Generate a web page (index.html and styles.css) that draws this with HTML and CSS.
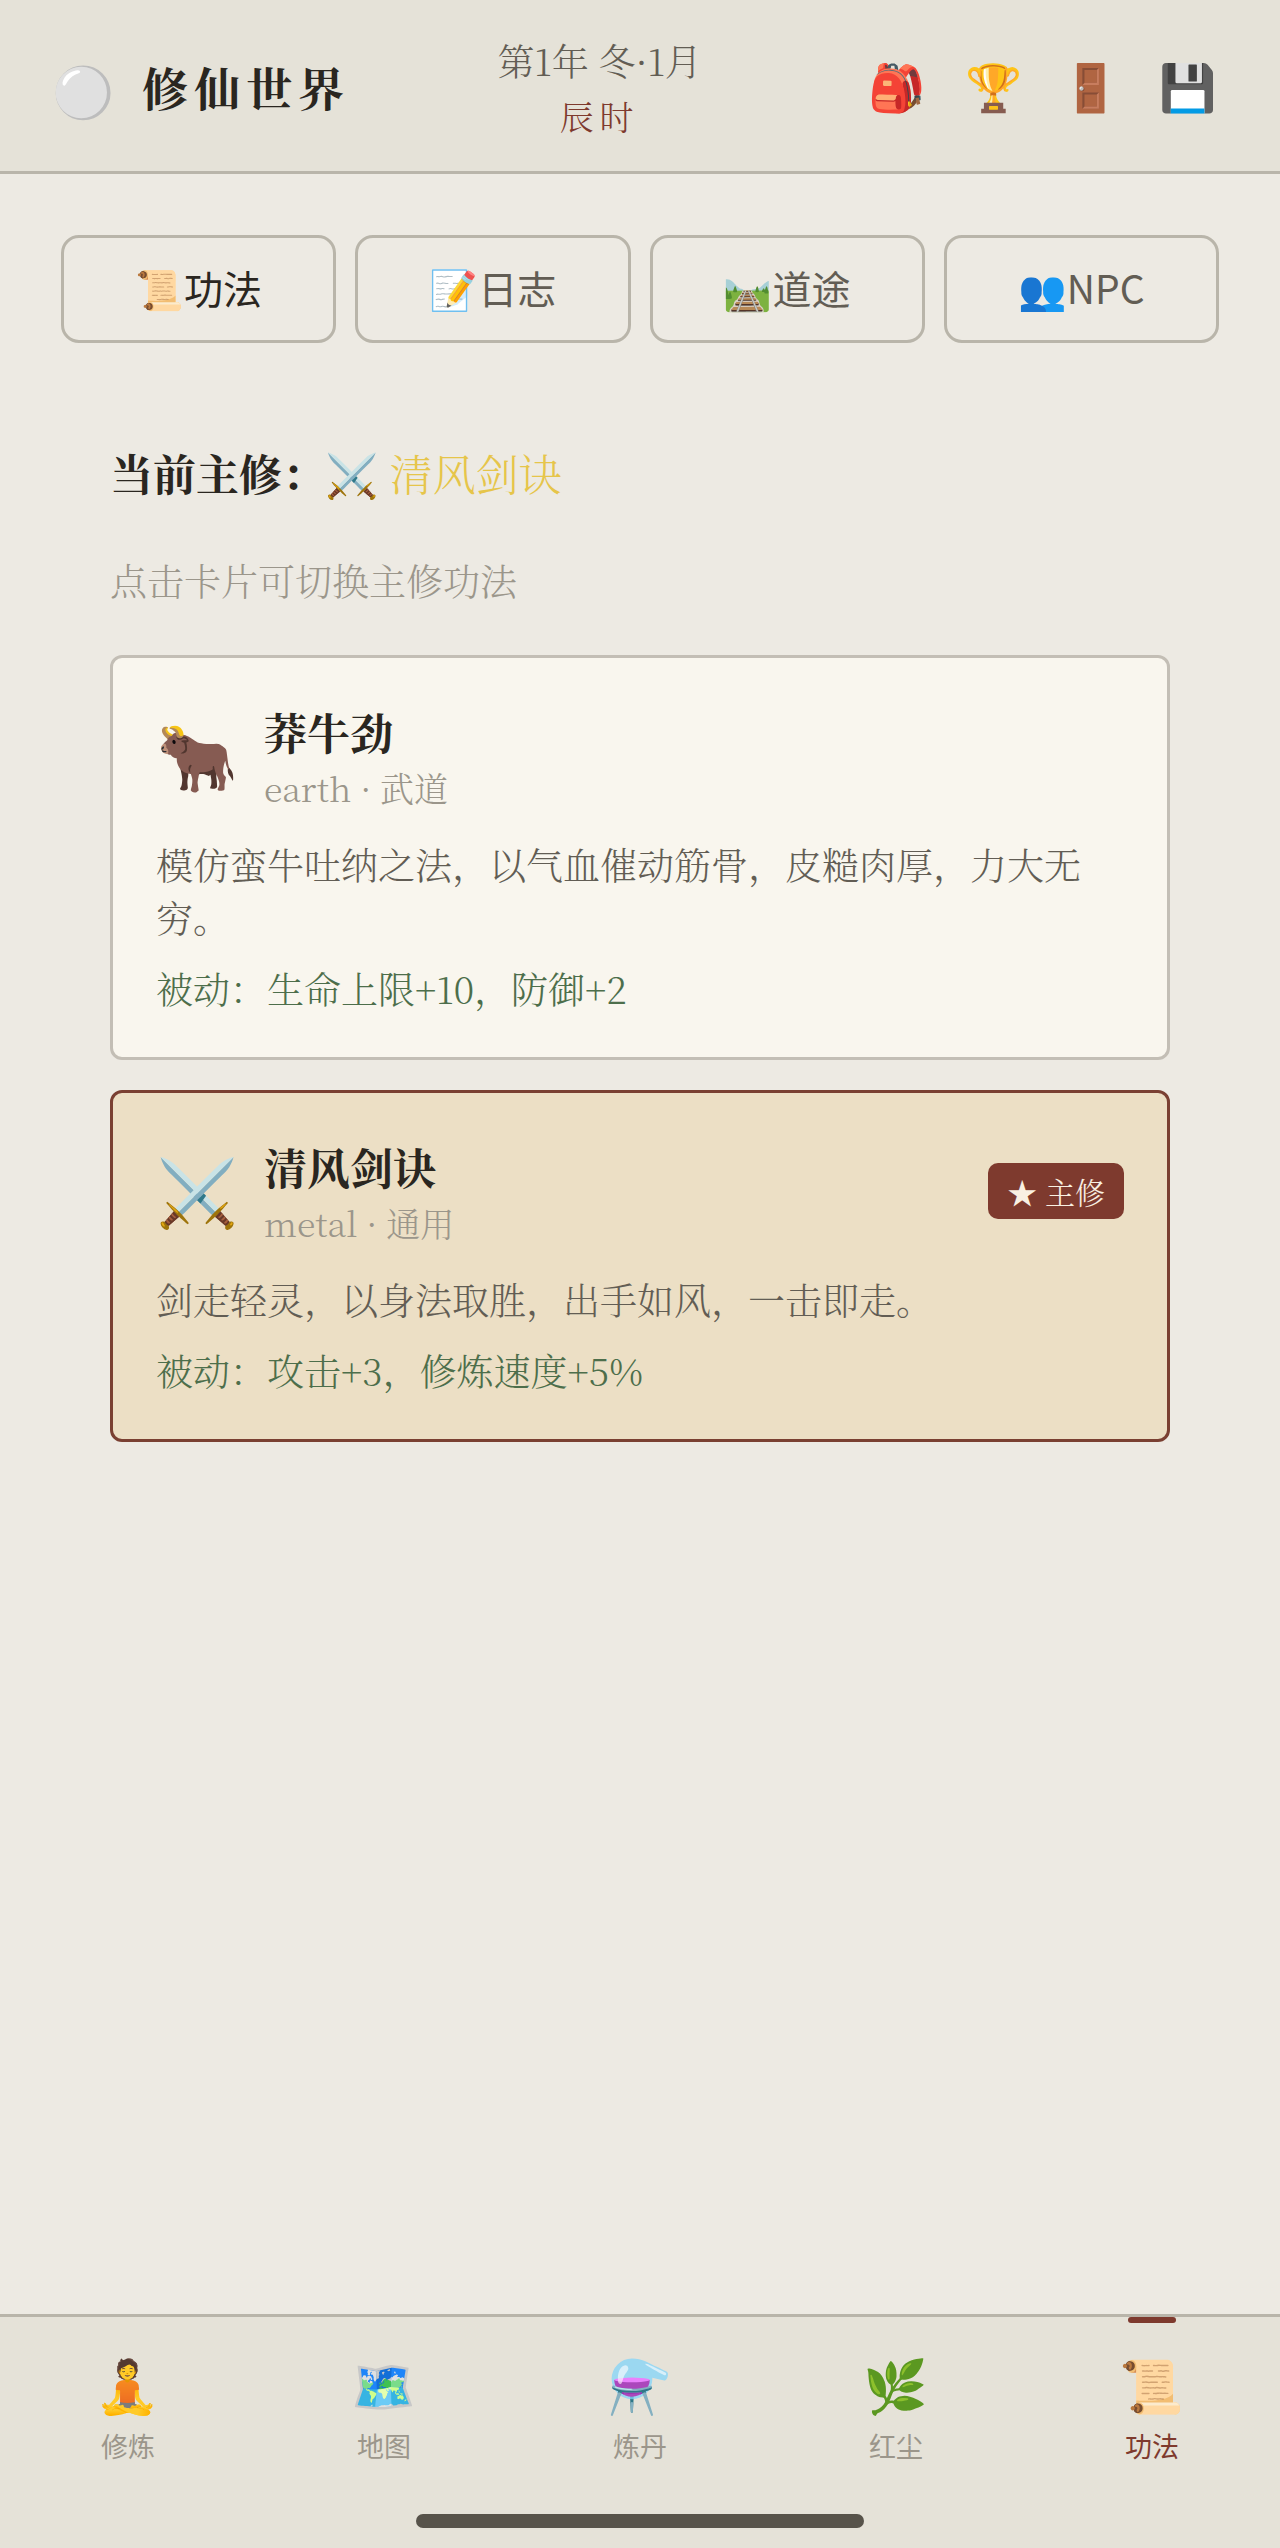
FILE: index.html
```html
<!DOCTYPE html>
<html lang="zh-CN">
<head>
<meta charset="utf-8">
<meta name="viewport" content="width=device-width, initial-scale=1">
<title>修仙世界</title>
<link rel="stylesheet" href="styles.css">
</head>
<body>
<header class="topbar">
  <div class="brand">
    <span class="brand-icon">⚪</span>
    <h1 class="brand-name">修仙世界</h1>
  </div>
  <div class="clock">
    <div class="date">第1年 冬·1月</div>
    <div class="hour">辰时</div>
  </div>
  <div class="tools">
    <button type="button" class="tool" aria-label="背包">🎒</button>
    <button type="button" class="tool" aria-label="成就">🏆</button>
    <button type="button" class="tool" aria-label="离开">🚪</button>
    <button type="button" class="tool" aria-label="存档">💾</button>
  </div>
</header>

<main class="content">
  <nav class="tabs">
    <button type="button" class="tab active">📜功法</button>
    <button type="button" class="tab">📝日志</button>
    <button type="button" class="tab">🛤️道途</button>
    <button type="button" class="tab">👥NPC</button>
  </nav>

  <section class="panel">
    <h2 class="current">当前主修：<span class="current-name">⚔️ 清风剑诀</span></h2>
    <p class="hint">点击卡片可切换主修功法</p>

    <div class="cards">
      <button type="button" class="card">
        <span class="card-head">
          <span class="card-icon">🐂</span>
          <span class="card-title">
            <span class="card-name">莽牛劲</span>
            <span class="card-type">earth · 武道</span>
          </span>
        </span>
        <span class="card-desc">模仿蛮牛吐纳之法，以气血催动筋骨，皮糙肉厚，力大无穷。</span>
        <span class="card-passive">被动：生命上限+10，防御+2</span>
      </button>

      <button type="button" class="card selected">
        <span class="card-head">
          <span class="card-icon">⚔️</span>
          <span class="card-title">
            <span class="card-name">清风剑诀</span>
            <span class="card-type">metal · 通用</span>
          </span>
          <span class="badge">★ 主修</span>
        </span>
        <span class="card-desc">剑走轻灵，以身法取胜，出手如风，一击即走。</span>
        <span class="card-passive">被动：攻击+3，修炼速度+5%</span>
      </button>
    </div>
  </section>
</main>

<footer class="bottom">
  <nav class="bottom-nav">
    <a href="#train" class="nav-item"><span class="nav-icon">🧘</span>修炼</a>
    <a href="#map" class="nav-item"><span class="nav-icon">🗺️</span>地图</a>
    <a href="#alchemy" class="nav-item"><span class="nav-icon">⚗️</span>炼丹</a>
    <a href="#world" class="nav-item"><span class="nav-icon">🌿</span>红尘</a>
    <a href="#skills" class="nav-item active"><span class="nav-icon">📜</span>功法</a>
  </nav>
  <div class="home-bar"></div>
</footer>
</body>
</html>
```
FILE: styles.css
```css
:root {
  --paper: #edeae3;
  --bar: #e5e2d8;
  --line: #b9b5aa;
  --ink: #2a2620;
  --ink-mid: #625d54;
  --ink-soft: #9b968b;
  --seal: #7e3a2e;
  --serif: "Noto Serif CJK SC", "Liberation Serif", "Noto Color Emoji", serif;
  --sans: "Noto Sans CJK SC", "Noto Color Emoji", sans-serif;
}

* {
  box-sizing: border-box;
}

body {
  margin: 0;
  min-height: 100vh;
  display: flex;
  flex-direction: column;
  background: var(--paper);
  color: var(--ink);
  font-family: var(--serif);
  font-weight: 300;
}

h1, h2, p {
  margin: 0;
}

button {
  margin: 0;
  padding: 0;
  border: 0;
  background: none;
  color: inherit;
  font: inherit;
  cursor: pointer;
}

/* Top bar */

.topbar {
  display: flex;
  justify-content: space-between;
  align-items: center;
  padding: 32px 43px 27px 52px;
  background: var(--bar);
  border-bottom: 3px solid var(--line);
}

.brand {
  display: flex;
  align-items: center;
  gap: 28px;
}

.brand-icon {
  font-size: 50px;
  line-height: 60px;
}

.brand-name {
  padding-bottom: 4px;
  font-size: 46px;
  line-height: 60px;
  font-weight: 700;
  letter-spacing: 6px;
}

.clock {
  display: flex;
  flex-direction: column;
  align-items: center;
  line-height: 56px;
}

.date {
  font-size: 37px;
  color: var(--ink-mid);
}

.hour {
  font-size: 34px;
  letter-spacing: 6px;
  color: var(--seal);
}

.tools {
  display: flex;
}

.tool {
  width: 97px;
  padding-bottom: 8px;
  font-size: 46px;
  line-height: 60px;
}

/* Content */

.content {
  flex: 1;
  padding: 61px;
}

.tabs {
  display: grid;
  grid-template-columns: repeat(4, 1fr);
  gap: 19px;
}

.tab {
  height: 108px;
  padding-bottom: 4px;
  border: 3px solid var(--line);
  border-radius: 18px;
  font-family: var(--sans);
  font-size: 39px;
  font-weight: 400;
  color: var(--ink-mid);
}

.tab.active {
  color: var(--ink);
}

.panel {
  padding: 98px 49px 0;
}

.current {
  font-size: 43px;
  line-height: 64px;
  font-weight: 700;
}

.current-name {
  font-weight: 300;
  color: #e6c54a;
}

.hint {
  margin-top: 49px;
  font-size: 37px;
  line-height: 53px;
  color: var(--ink-soft);
}

.cards {
  display: flex;
  flex-direction: column;
  gap: 30px;
  margin-top: 48px;
}

.card {
  display: flex;
  flex-direction: column;
  padding: 42px 43px;
  border: 3px solid #c3beb5;
  border-radius: 12px;
  background: #f9f6ee;
  text-align: left;
  font-size: 37px;
  line-height: 53px;
}

.card.selected {
  background: #ecdfc5;
  border-color: #7a4032;
}

.card-head {
  display: flex;
  align-items: center;
  gap: 26px;
}

.card-icon {
  width: 82px;
  padding-bottom: 6px;
  font-size: 66px;
  line-height: 80px;
}

.card-title {
  flex: 1;
  display: flex;
  flex-direction: column;
}

.card-name {
  font-size: 43px;
  line-height: 64px;
  font-weight: 700;
}

.card-type {
  font-size: 34px;
  line-height: 48px;
  color: var(--ink-soft);
}

.badge {
  padding: 0 19px;
  border-radius: 10px;
  background: var(--seal);
  color: #f9f0e2;
  font-size: 30px;
  line-height: 56px;
}

.card-desc {
  margin-top: 26px;
  color: var(--ink-mid);
}

.card-passive {
  margin-top: 18px;
  color: #4d6e4b;
}

/* Bottom bar */

.bottom {
  background: var(--bar);
  border-top: 3px solid var(--line);
  padding-bottom: 20px;
}

.bottom-nav {
  display: grid;
  grid-template-columns: repeat(5, 1fr);
}

.nav-item {
  position: relative;
  display: flex;
  flex-direction: column;
  align-items: center;
  gap: 14px;
  padding: 35px 0 50px;
  font-family: var(--sans);
  font-size: 27px;
  line-height: 36px;
  font-weight: 400;
  color: var(--ink-soft);
  text-decoration: none;
}

.nav-icon {
  font-size: 52px;
  line-height: 62px;
}

.nav-item.active {
  color: var(--seal);
}

.nav-item.active::before {
  content: "";
  position: absolute;
  top: 0;
  left: 50%;
  width: 48px;
  height: 6px;
  margin-left: -24px;
  border-radius: 3px;
  background: var(--seal);
}

.home-bar {
  width: 35%;
  height: 14px;
  margin: 0 auto;
  border-radius: 7px;
  background: #57534a;
}
```
